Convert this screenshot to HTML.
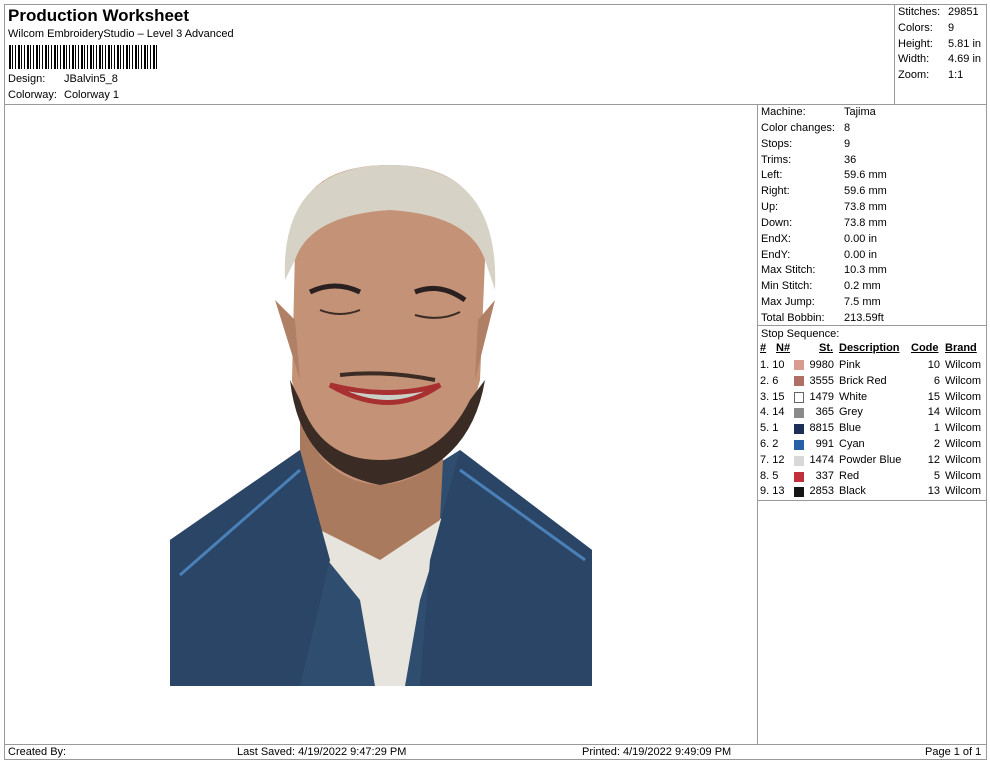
<!DOCTYPE html>
<html><head><style>
body{margin:0;width:990px;height:762px;background:#fff;font-family:"Liberation Sans",Arial,sans-serif;color:#000;position:relative;overflow:hidden}
.a{position:absolute;white-space:nowrap}
.s{font-size:11px}
.ln{position:absolute;background:#999}
</style></head><body>
<div style="position:absolute;left:4px;top:4px;width:981px;height:754px;border:1px solid #999"></div>
<div class="ln" style="left:4px;top:104px;width:982px;height:1px"></div>
<div class="ln" style="left:894px;top:4px;width:1px;height:100px"></div>
<div class="ln" style="left:757px;top:104px;width:1px;height:640px"></div>
<div class="ln" style="left:4px;top:744px;width:982px;height:1px"></div>
<div class="ln" style="left:757px;top:325px;width:229px;height:1px"></div>
<div class="ln" style="left:757px;top:500px;width:229px;height:1px"></div>
<div class="a" style="left:8px;top:6px;font-size:17px;font-weight:bold">Production Worksheet</div>
<div class="a s" style="left:8px;top:28px">Wilcom EmbroideryStudio – Level 3 Advanced</div>
<div class="a" style="left:9px;top:45px;width:148px;height:24px;background:repeating-linear-gradient(90deg,#000 0 2px,#fff 2px 3px,#000 3px 4px,#fff 4px 6px,#000 6px 7px,#fff 7px 9px)"></div>
<div class="a s" style="left:8px;top:73px">Design:</div><div class="a s" style="left:64px;top:73px">JBalvin5_8</div>
<div class="a s" style="left:8px;top:89px">Colorway:</div><div class="a s" style="left:64px;top:89px">Colorway 1</div>
<div class="a s" style="left:898px;top:5px;line-height:15.8px">Stitches:<br>Colors:<br>Height:<br>Width:<br>Zoom:</div>
<div class="a s" style="left:948px;top:5px;line-height:15.8px">29851<br>9<br>5.81 in<br>4.69 in<br>1:1</div>
<div class="a s" style="left:761px;top:105px;line-height:15.85px">Machine:<br>Color changes:<br>Stops:<br>Trims:<br>Left:<br>Right:<br>Up:<br>Down:<br>EndX:<br>EndY:<br>Max Stitch:<br>Min Stitch:<br>Max Jump:<br>Total Bobbin:<br>Stop Sequence:</div>
<div class="a s" style="left:844px;top:105px;line-height:15.85px">Tajima<br>8<br>9<br>36<br>59.6 mm<br>59.6 mm<br>73.8 mm<br>73.8 mm<br>0.00 in<br>0.00 in<br>10.3 mm<br>0.2 mm<br>7.5 mm<br>213.59ft</div>
<div class="a s" style="left:760px;top:342px;font-weight:bold;text-decoration:underline">#</div>
<div class="a s" style="left:776px;top:342px;font-weight:bold;text-decoration:underline">N#</div>
<div class="a s" style="left:819px;top:342px;font-weight:bold;text-decoration:underline">St.</div>
<div class="a s" style="left:839px;top:342px;font-weight:bold;text-decoration:underline">Description</div>
<div class="a s" style="left:911px;top:342px;font-weight:bold;text-decoration:underline">Code</div>
<div class="a s" style="left:945px;top:342px;font-weight:bold;text-decoration:underline">Brand</div>
<div class="a s" style="left:760px;top:358px;line-height:15.8px">1. 10<br>2. 6<br>3. 15<br>4. 14<br>5. 1<br>6. 2<br>7. 12<br>8. 5<br>9. 13</div>
<div class="a" style="left:794px;top:360px;width:10px">
<div style="height:10px;background:#d99a92;margin-bottom:5.8px"></div>
<div style="height:10px;background:#b06f66;margin-bottom:5.8px"></div>
<div style="height:9px;border:1px solid #666;width:8px;background:#fff;margin-bottom:5.8px"></div>
<div style="height:10px;background:#8a8a8a;margin-bottom:5.8px"></div>
<div style="height:10px;background:#1c2e55;margin-bottom:5.8px"></div>
<div style="height:10px;background:#2860a8;margin-bottom:5.8px"></div>
<div style="height:10px;background:#d8d8d8;margin-bottom:5.8px"></div>
<div style="height:10px;background:#c0303a;margin-bottom:5.8px"></div>
<div style="height:10px;background:#151515"></div></div>
<div class="a s" style="left:806px;top:358px;line-height:15.8px;width:28px;text-align:right">9980<br>3555<br>1479<br>365<br>8815<br>991<br>1474<br>337<br>2853</div>
<div class="a s" style="left:839px;top:358px;line-height:15.8px">Pink<br>Brick Red<br>White<br>Grey<br>Blue<br>Cyan<br>Powder Blue<br>Red<br>Black</div>
<div class="a s" style="left:918px;top:358px;line-height:15.8px;width:22px;text-align:right">10<br>6<br>15<br>14<br>1<br>2<br>12<br>5<br>13</div>
<div class="a s" style="left:945px;top:358px;line-height:15.8px">Wilcom<br>Wilcom<br>Wilcom<br>Wilcom<br>Wilcom<br>Wilcom<br>Wilcom<br>Wilcom<br>Wilcom</div>
<div class="a s" style="left:8px;top:746px">Created By:</div>
<div class="a s" style="left:237px;top:746px">Last Saved: 4/19/2022 9:47:29 PM</div>
<div class="a s" style="left:582px;top:746px">Printed: 4/19/2022 9:49:09 PM</div>
<div class="a s" style="left:925px;top:746px">Page 1 of 1</div>
<svg class="a" style="left:0;top:0" width="757" height="744">
<path d="M170 540 L300 450 L380 500 L460 450 L592 550 L592 686 L170 686 Z" fill="#2f4d6e"/>
<path d="M295 520 L380 500 L445 520 L420 600 L405 686 L375 686 L360 600 Z" fill="#e6e4dc"/>
<path d="M300 400 L300 520 L380 560 L440 520 L445 420 Z" fill="#a97a5e"/>
<path d="M295 250 Q290 165 390 165 Q490 165 485 260 L480 380 Q455 480 380 485 Q305 480 292 380 Z" fill="#c49276"/>
<path d="M275 300 L295 320 L300 380 Z M495 300 L478 320 L475 380 Z" fill="#b08066"/>
<path d="M285 280 Q280 165 390 165 Q500 165 495 290 L485 260 Q470 215 390 210 Q310 215 295 260 Z" fill="#d6d2c6"/>
<path d="M290 380 Q300 470 380 485 Q470 470 485 380 L470 400 Q440 460 380 460 Q320 460 300 400 Z" fill="#3a2c24"/>
<path d="M310 292 Q335 280 360 292 M415 292 Q440 282 465 300" stroke="#2a2020" stroke-width="5" fill="none"/>
<path d="M320 310 Q340 318 360 310 M415 315 Q440 322 460 312" stroke="#3a2c24" stroke-width="2" fill="none"/>
<path d="M330 385 Q390 420 440 385 Q390 400 330 385 Z" fill="#c8d0c8" stroke="#a83030" stroke-width="5"/>
<path d="M340 375 Q385 370 435 380" stroke="#3a2c24" stroke-width="4" fill="none"/>
<path d="M170 540 L300 450 L330 560 L300 686 L170 686 Z" fill="#2a4566"/>
<path d="M460 450 L592 550 L592 686 L420 686 L430 560 Z" fill="#2a4566"/>
<path d="M180 575 L300 470 M460 470 L585 560" stroke="#4a80b8" stroke-width="3" fill="none"/>
</svg>
</body></html>
